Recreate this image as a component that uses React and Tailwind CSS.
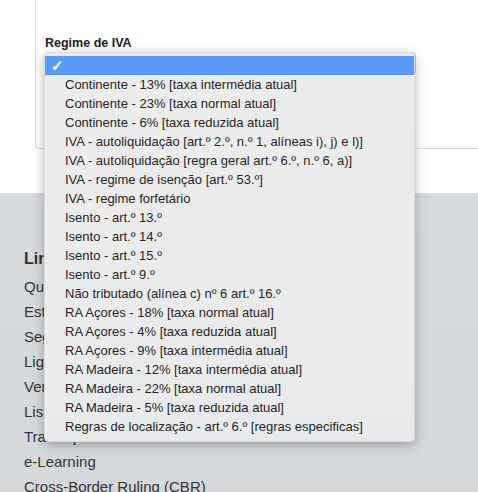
import React from "react";

const items = [
  "Continente - 13% [taxa intermédia atual]",
  "Continente - 23% [taxa normal atual]",
  "Continente - 6% [taxa reduzida atual]",
  "IVA - autoliquidação [art.º 2.º, n.º 1, alíneas i), j) e l)]",
  "IVA - autoliquidação [regra geral art.º 6.º, n.º 6, a)]",
  "IVA - regime de isenção [art.º 53.º]",
  "IVA - regime forfetário",
  "Isento - art.º 13.º",
  "Isento - art.º 14.º",
  "Isento - art.º 15.º",
  "Isento - art.º 9.º",
  "Não tributado (alínea c) nº 6 art.º 16.º",
  "RA Açores - 18% [taxa normal atual]",
  "RA Açores - 4% [taxa reduzida atual]",
  "RA Açores - 9% [taxa intermédia atual]",
  "RA Madeira - 12% [taxa intermédia atual]",
  "RA Madeira - 22% [taxa normal atual]",
  "RA Madeira - 5% [taxa reduzida atual]",
  "Regras de localização - art.º 6.º [regras especificas]",
];

const links = [
  "Questões frequentes",
  "Estatísticas",
  "Segurança",
  "Ligações úteis",
  "Verificar faturas",
  "Lista de serviços",
  "Transações Intracomunitárias",
  "e-Learning",
  "Cross-Border Ruling (CBR)",
];

export default function App() {
  return (
    <div
      className="relative w-[478px] h-[492px] overflow-hidden bg-white text-[#333]"
      style={{ fontFamily: '"Liberation Sans", Arial, sans-serif' }}
    >
      <div className="h-[193px] bg-white">
        <div className="ml-[35px] h-[149px] border-l border-b border-[#dcdcdc] rounded-bl-[4px] pl-[9px] pt-[35px]">
          <div className="text-[12.5px] font-bold leading-[16px] text-[#222]">Regime de IVA</div>
          <div className="mt-[1px] w-[371px] h-[24px] border border-[#ccc] rounded-[4px] bg-white"></div>
        </div>
      </div>
      <div className="h-[299px] bg-gradient-to-b from-[#d7dadd] to-[#d5d8db] pl-[24px] pt-[56px]">
        <div className="text-[16px] font-bold leading-[20px] text-[#333]">Links úteis</div>
        <div className="mt-[5px] flex flex-col">
          {links.map((l) => (
            <div key={l} className="text-[15px] leading-[25px] text-[#333] whitespace-nowrap">
              {l}
            </div>
          ))}
        </div>
      </div>

      <div className="absolute left-[44px] top-[52px] w-[371px] rounded-[5px] bg-gradient-to-b from-[#ececec] to-[#e9eaeb] pt-[3px] pb-[5px] shadow-[0_3px_12px_rgba(0,0,0,0.28)] border border-[#d0d0d0]/60">
        <div className="h-[19px] bg-[#5b9bf7] flex items-center pl-[6px] text-white text-[15px] font-bold leading-[19px]">
          ✓
        </div>
        {items.map((t) => (
          <div
            key={t}
            className="h-[19px] pl-[20px] text-[13px] leading-[19px] text-[#262626] whitespace-nowrap"
          >
            {t}
          </div>
        ))}
      </div>
    </div>
  );
}
